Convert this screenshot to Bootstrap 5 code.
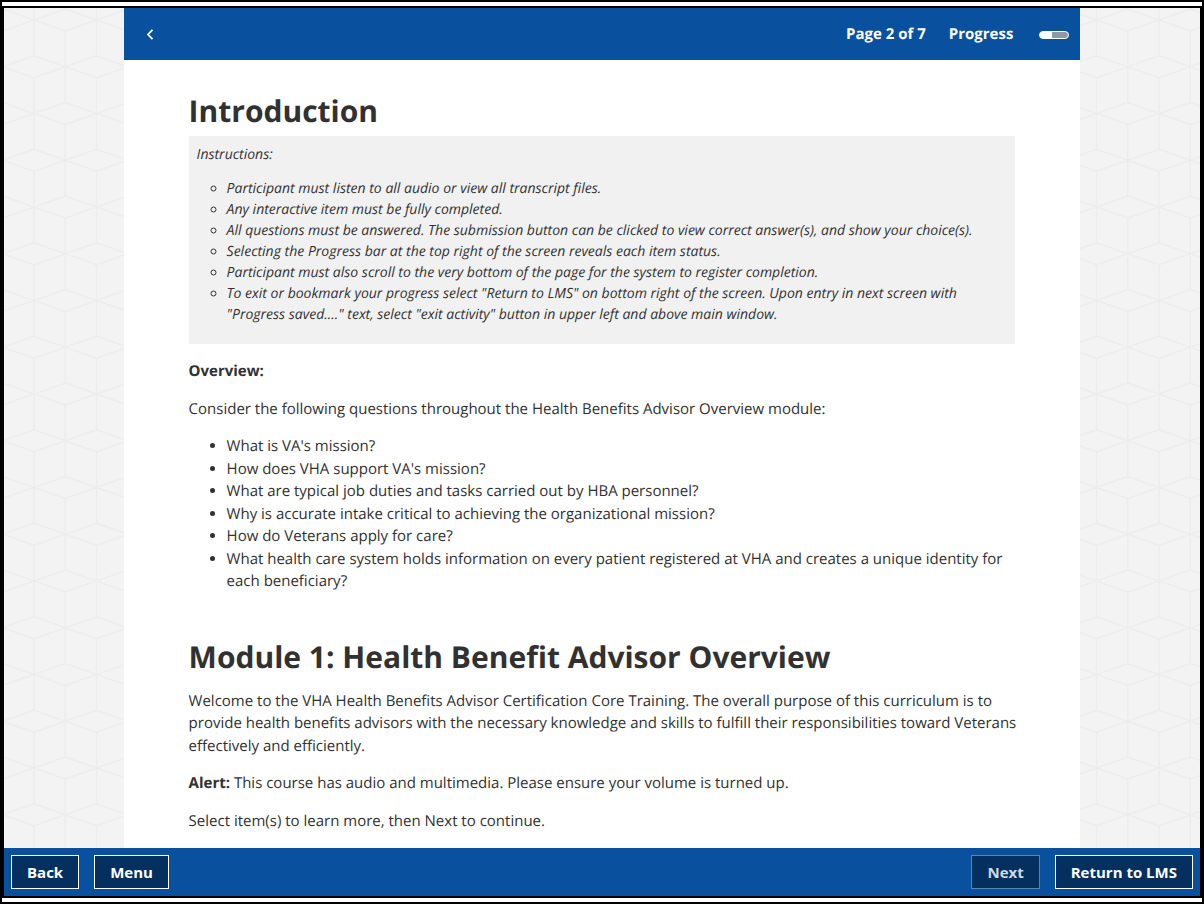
<!DOCTYPE html>
<html lang="en">
<head>
<meta charset="utf-8">
<meta name="viewport" content="width=device-width, initial-scale=1">
<title>Health Benefit Advisor Overview</title>
<link href="https://cdn.jsdelivr.net/npm/bootstrap@5.3.0/dist/css/bootstrap.min.css" rel="stylesheet">
<style>
  body { font-family: "Open Sans", "Noto Sans", sans-serif; font-size: 15px; line-height: 1.5; color: #313131; text-rendering: geometricPrecision; }
  .window-frame { border: 2px solid #000; padding: 4px 0; background: #fff; }
  .player { border: 2px solid #000; min-height: 0; }
  .stage {
    min-height: 0;
    background: #f3f3f3 url("data:image/svg+xml,%3Csvg xmlns='http://www.w3.org/2000/svg' width='125' height='187' viewBox='0 0 124 188' preserveAspectRatio='none'%3E%3Cg fill='none' stroke='%23ededed' stroke-width='1.5'%3E%3Cpath d='M0 0L31-11L62 0L93-11L124 0M0 0L31 11L62 0L93 11L124 0M0 36L31 47L62 36L93 47L124 36M0 58L31 47L62 58L93 47L124 58M0 94L31 83L62 94L93 83L124 94M0 94L31 105L62 94L93 105L124 94M0 130L31 141L62 130L93 141L124 130M0 152L31 141L62 152L93 141L124 152M0 188L31 177L62 188L93 177L124 188M0 0V36M0 58V130M0 152V188M124 0V36M124 58V130M124 152V188M62 0V36M62 58V130M62 152V188M31 11V83M31 105V177M93 11V83M93 105V177'/%3E%3C/g%3E%3C/svg%3E") 30px 12px;
  }
  .sheet { width: 80%; background: #fff; min-height: 0; }
  .bar-blue { background: #09509e; color: #fff; }
  .topbar { height: 52px; padding: 1px 11px 0 19px; }
  .page-count { margin-right: 23px; }
  .topbar-link { color: #fff; font-weight: 700; text-decoration: none; gap: 26px; }
  .icon-button { width: 14px; height: 20px; color: #fff; background: none; border: 0; }
  .progress-pill { width: 30px; height: 8px; border: 1px solid #fff; border-radius: 4px; background: #8f9a9e; }
  .lesson { padding: 33px 62px 0 65px; overflow-y: auto; scrollbar-width: none; min-height: 0; }
  .lesson::-webkit-scrollbar { display: none; }
  .lesson h1, .lesson h2 { font-size: 30px; font-weight: 700; line-height: 36px; }
  .lesson h1 { margin-bottom: 7px; }
  .lesson h2 { margin-bottom: 15px; }
  .lesson p { margin-bottom: 15px; }
  .question-list { padding-left: 38px; margin-bottom: 46px; }
  .instructions { background: #f1f1f1; font-size: 14px; font-style: italic; padding: 8px 8px 19px; margin: 0 3px 16px 0; }
  .lesson .instructions p { margin-bottom: 13px; }
  .instructions ul { list-style: circle; padding-left: 30px; margin: 0; }
  .footer-bar { padding: 7px; height: 48px; gap: 15px; }
  .player-btn { --bs-btn-color: #fff; --bs-btn-bg: #03305e; --bs-btn-border-color: #fff; --bs-btn-hover-color: #fff; --bs-btn-hover-bg: #02264a; --bs-btn-hover-border-color: #fff; --bs-btn-border-radius: 0; --bs-btn-font-size: 15px; --bs-btn-font-weight: 700; --bs-btn-padding-x: 15px; --bs-btn-padding-y: 5px; --bs-btn-disabled-color: #cfd9e4; --bs-btn-disabled-bg: #03305e; --bs-btn-disabled-border-color: #5a84ad; --bs-btn-disabled-opacity: 1; line-height: 22px; }
</style>
</head>
<body>
<div class="window-frame vh-100 d-flex flex-column">
  <div class="player flex-fill d-flex flex-column">
    <div class="stage flex-fill d-flex justify-content-center">
      <div class="sheet d-flex flex-column">
        <header class="bar-blue topbar d-flex align-items-center flex-shrink-0">
          <button type="button" class="icon-button p-0 d-flex align-items-center justify-content-center me-auto" aria-label="Previous page">
            <svg width="14" height="14" viewBox="0 0 14 14" fill="none" stroke="currentColor" stroke-width="1.8"><path d="M9.500 1.800L5 6.500L9.500 11.200"/></svg>
          </button>
          <span class="page-count fw-bold">Page 2 of 7</span>
          <a class="topbar-link d-flex align-items-center" href="#status">Progress
            <span class="progress-pill d-flex overflow-hidden"><span class="bg-white" style="width: 42%"></span></span>
          </a>
        </header>
        <main class="lesson flex-fill">
          <h1>Introduction</h1>
          <section class="instructions">
            <p>Instructions:</p>
            <ul>
              <li>Participant must listen to all audio or view all transcript files.</li>
              <li>Any interactive item must be fully completed.</li>
              <li>All questions must be answered. The submission button can be clicked to view correct answer(s), and show your choice(s).</li>
              <li>Selecting the Progress bar at the top right of the screen reveals each item status.</li>
              <li>Participant must also scroll to the very bottom of the page for the system to register completion.</li>
              <li>To exit or bookmark your progress select "Return to LMS" on bottom right of the screen. Upon entry in next screen with "Progress saved...." text, select "exit activity" button in upper left and above main window.</li>
            </ul>
          </section>
          <p><strong>Overview:</strong></p>
          <p>Consider the following questions throughout the Health Benefits Advisor Overview module:</p>
          <ul class="question-list">
            <li>What is VA's mission?</li>
            <li>How does VHA support VA's mission?</li>
            <li>What are typical job duties and tasks carried out by HBA personnel?</li>
            <li>Why is accurate intake critical to achieving the organizational mission?</li>
            <li>How do Veterans apply for care?</li>
            <li>What health care system holds information on every patient registered at VHA and creates a unique identity for each beneficiary?</li>
          </ul>
          <h2>Module 1: Health Benefit Advisor Overview</h2>
          <p>Welcome to the VHA Health Benefits Advisor Certification Core Training. The overall purpose of this curriculum is to provide health benefits advisors with the necessary knowledge and skills to fulfill their responsibilities toward Veterans effectively and efficiently.</p>
          <p><strong>Alert:</strong> This course has audio and multimedia. Please ensure your volume is turned up.</p>
          <p>Select item(s) to learn more, then Next to continue.</p>
        </main>
      </div>
    </div>
    <footer class="bar-blue footer-bar d-flex align-items-center">
      <button type="button" class="btn player-btn">Back</button>
      <button type="button" class="btn player-btn me-auto">Menu</button>
      <button type="button" class="btn player-btn" disabled>Next</button>
      <button type="button" class="btn player-btn">Return to LMS</button>
    </footer>
  </div>
</div>
<script src="https://cdn.jsdelivr.net/npm/bootstrap@5.3.0/dist/js/bootstrap.bundle.min.js"></script>
</body>
</html>
